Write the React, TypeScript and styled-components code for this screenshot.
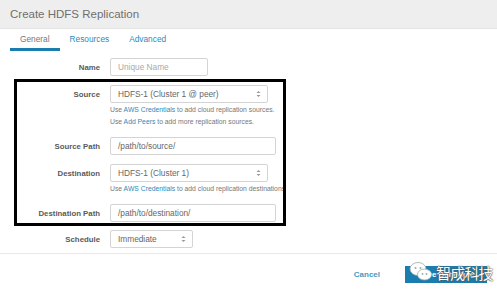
import styled, { createGlobalStyle } from "styled-components";

const GlobalStyle = createGlobalStyle`
  html, body {
    margin: 0;
    padding: 0;
    background: #fff;
  }
  body {
    font-family: "Liberation Sans", Arial, sans-serif;
    overflow: hidden;
  }
`;

const ArrowIcon = () => (
  <svg width="5" height="8" viewBox="0 0 5 8">
    <path d="M0.5 3 L2.5 1 L4.5 3 Z" fill="#999" />
    <path d="M0.5 5 L2.5 7 L4.5 5 Z" fill="#999" />
  </svg>
);

type FieldProps = {
  label: string;
  value: string;
  select?: boolean;
  placeholder?: boolean;
  width: number;
};

const Field = ({ label, value, select, placeholder, width }: FieldProps) => (
  <Row>
    <Label>{label}</Label>
    <Control style={{ width }} $muted={placeholder}>
      <span>{value}</span>
      {select && <ArrowIcon />}
    </Control>
  </Row>
);

export default function App() {
  return (
    <>
      <GlobalStyle />
      <Dialog>
        <Header>Create HDFS Replication</Header>
        <Tabs>
          <Tab $active>General</Tab>
          <Tab>Resources</Tab>
          <Tab>Advanced</Tab>
        </Tabs>
        <Form>
          <Field label="Name" value="Unique Name" placeholder width={98} />
          <Highlight>
            <Group>
              <Field label="Source" value="HDFS-1 (Cluster 1 @ peer)" select width={158} />
              <Help>
                <p>
                  Use <a>AWS Credentials</a> to add cloud replication sources.
                </p>
                <p>
                  Use <a>Add Peers</a> to add more replication sources.
                </p>
              </Help>
            </Group>
            <Field label="Source Path" value="/path/to/source/" width={166} />
            <Group>
              <Field label="Destination" value="HDFS-1 (Cluster 1)" select width={158} />
              <Help>
                <p>
                  Use <a>AWS Credentials</a> to add cloud replication destinations.
                </p>
              </Help>
            </Group>
            <Field label="Destination Path" value="/path/to/destination/" width={166} />
          </Highlight>
          <Field label="Schedule" value="Immediate" select width={83} />
        </Form>
        <Footer>
          <CancelLink>Cancel</CancelLink>
          <SaveButton>Save Schedule</SaveButton>
          <Watermark>
            <svg width="24" height="22" viewBox="0 0 24 22">
              <ellipse cx="9" cy="8" rx="8" ry="6.5" fill="#fff" stroke="#9aa" strokeWidth="0.8" />
              <ellipse cx="15.5" cy="13.5" rx="7" ry="5.5" fill="#fff" stroke="#9aa" strokeWidth="0.8" />
              <circle cx="6.5" cy="7" r="1" fill="#9aa" />
              <circle cx="11.5" cy="7" r="1" fill="#9aa" />
              <circle cx="13.5" cy="13" r="0.9" fill="#9aa" />
              <circle cx="17.5" cy="13" r="0.9" fill="#9aa" />
            </svg>
            <WatermarkText>智成科技</WatermarkText>
          </Watermark>
        </Footer>
      </Dialog>
    </>
  );
}

const Dialog = styled.div`
  width: 497px;
  height: 291px;
  position: relative;
  background: #fff;
`;

const Header = styled.div`
  height: 29px;
  box-sizing: border-box;
  padding-left: 10px;
  display: flex;
  align-items: center;
  background: #efeeee;
  border-bottom: 1px solid #e4e4e4;
  color: #6f6f6f;
  font-size: 11.5px;
`;

const Tabs = styled.div`
  display: flex;
  padding-left: 10px;
  height: 22px;
`;

const Tab = styled.div<{ $active?: boolean }>`
  display: flex;
  align-items: center;
  padding: 0 10px;
  font-size: 8.3px;
  box-sizing: border-box;
  border-bottom: 3px solid ${(p) => (p.$active ? "#1b7dae" : "transparent")};
  color: ${(p) => (p.$active ? "#777" : "#2b8bbb")};
`;

const Form = styled.div`
  --label-w: 100px;
  display: flex;
  flex-direction: column;
  padding-top: 7px;
  gap: 4px;
`;

const Highlight = styled.div`
  --label-w: 83px;
  margin-left: 14px;
  margin-top: -1px;
  width: 272px;
  box-sizing: border-box;
  border: 3px solid #000;
  padding: 3px 0 1px;
  display: flex;
  flex-direction: column;
  gap: 9px;
  overflow: hidden;
`;

const Group = styled.div`
  display: flex;
  flex-direction: column;
  gap: 1px;
`;

const Row = styled.div`
  display: flex;
  align-items: center;
  gap: 10px;
`;

const Label = styled.div`
  width: var(--label-w);
  text-align: right;
  font-size: 7.8px;
  font-weight: bold;
  color: #5a5a5a;
`;

const Control = styled.div<{ $muted?: boolean }>`
  height: 18px;
  box-sizing: border-box;
  border: 1px solid #d4d4d4;
  border-radius: 2px;
  padding: 0 6px 0 7px;
  display: flex;
  align-items: center;
  justify-content: space-between;
  font-size: 8.3px;
  color: ${(p) => (p.$muted ? "#aaa" : "#666")};
  background: #fff;
`;

const Help = styled.div`
  padding-left: calc(var(--label-w) + 10px);
  font-size: 6.8px;
  color: #777;
  white-space: nowrap;

  p {
    margin: 0;
    height: 12px;
    line-height: 12px;
  }

  a {
    color: #2b8bbb;
  }
`;

const Footer = styled.div`
  position: absolute;
  left: 0;
  right: 0;
  top: 253px;
  bottom: 0;
  border-top: 1px solid #e8e8e8;
  display: flex;
  align-items: center;
  justify-content: flex-end;
  padding: 4px 10px 0 0;
  gap: 25px;
`;

const CancelLink = styled.div`
  font-size: 8px;
  font-weight: bold;
  color: #4a98c0;
`;

const SaveButton = styled.div`
  width: 82px;
  height: 17px;
  background: #1b7dae;
  color: #fff;
  font-size: 8px;
  font-weight: bold;
  display: flex;
  align-items: center;
  justify-content: center;
`;

const Watermark = styled.div`
  position: absolute;
  left: 409px;
  top: 7px;
  display: flex;
  align-items: center;
  gap: 3px;
`;

const WatermarkText = styled.span`
  font-family: "Noto Sans CJK SC", sans-serif;
  font-size: 15px;
  color: #fff;
  letter-spacing: -0.8px;
  text-shadow: 0 0 1px #444, 0 0 1px #444, 0 0 2px #666;
`;
